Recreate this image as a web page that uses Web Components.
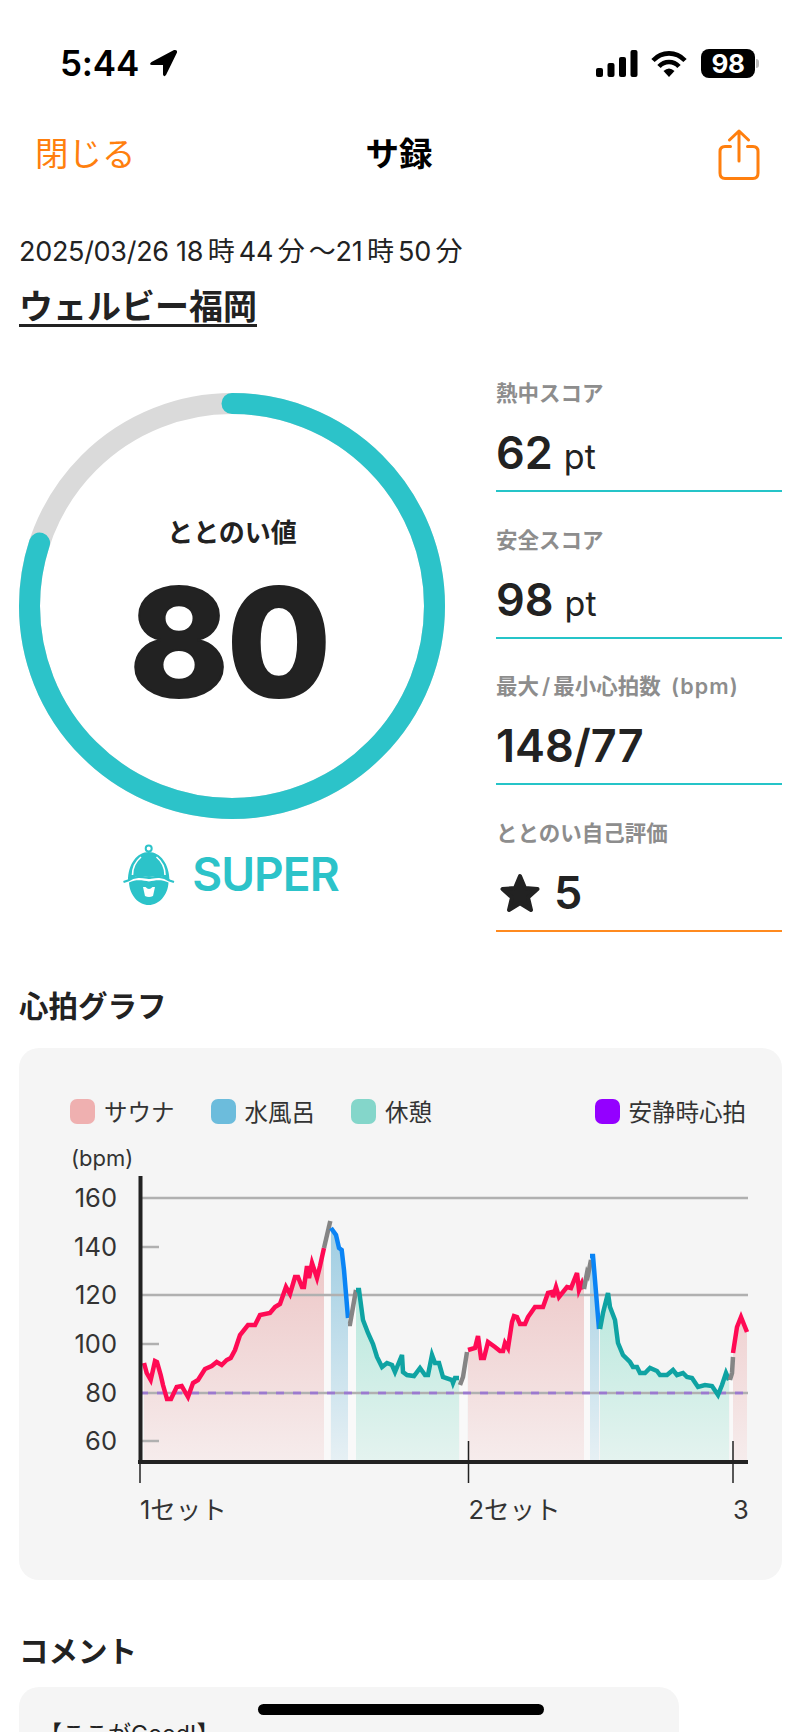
<!DOCTYPE html>
<html lang="ja">
<head>
<meta charset="utf-8">
<title>サ録</title>
<style>
  html, body { margin: 0; padding: 0; background: #fff; }
  body {
    width: 800px;
    height: 1732px;
    overflow: hidden;
    position: relative;
    color: #222;
    font-family: Inter, "Noto Sans CJK JP", sans-serif;
  }
</style>
</head>
<body>
<status-bar time="5:44" battery="98"></status-bar>
<nav-bar title="サ録" close="閉じる"></nav-bar>
<visit-header place="ウェルビー福岡">2025/03/26 18<b>時</b>44<b>分</b>〜21<b>時</b>50<b>分</b></visit-header>
<score-panel>
  <score-ring slot="ring" value="80" label="ととのい値" rank="SUPER"></score-ring>
  <score-row value="62" unit="pt">熱中スコア</score-row>
  <score-row value="98" unit="pt">安全スコア</score-row>
  <score-row value="148/77">最大<i>/</i>最小心拍数 <u>(bpm)</u></score-row>
  <score-row value="5" star accent="#ff8a1f">ととのい自己評価</score-row>
</score-panel>
<section-title style="margin-top:52px">心拍グラフ</section-title>
<heart-card style="margin-top:24px"></heart-card>
<section-title style="margin-top:49px">コメント</section-title>
<comment-card style="margin-top:18px">【ここがGood!】</comment-card>
<home-bar></home-bar>

<script>
const TEAL = '#2cc3c9';
const ORANGE = '#ff7f0e';

function define(name, cls) {
  customElements.define(name, cls);
}

class StatusBar extends HTMLElement {
  constructor() {
    super();
    this.attachShadow({mode: 'open'});
    this.shadowRoot.innerHTML = `
      <style>
        :host { display: flex; height: 108px; box-sizing: border-box; padding: 48px 45px 0 60px; justify-content: space-between; align-items: flex-start; color: #000; }
        .left, .right { display: flex; align-items: center; height: 30px; }
        .time { font: 600 35px/30px Inter, sans-serif; letter-spacing: -.2px; }
        .left svg { margin-left: 10px; }
        .right svg { display: block; }
        .bat { margin-left: 14px; width: 54px; height: 29px; border-radius: 8px; background: #000; color: #fff; font: 700 26px/29px Inter, sans-serif; text-align: center; letter-spacing: -.5px; position: relative; }
        .bat::after { content: ''; position: absolute; right: -4px; top: 10px; width: 3px; height: 9px; border-radius: 0 3px 3px 0; background: #bbb; }
      </style>
      <div class="left">
        <span class="time">${this.getAttribute('time')}</span>
        <svg width="28" height="28" viewBox="0 0 28 28"><path d="M25 1 2.500 13Q-.5 15.500 3 16H14V25.500Q15 28.500 17 26L28 3.500Q28.500.5 25 1Z" fill="#000"/></svg>
      </div>
      <div class="right">
        <svg width="42" height="27" viewBox="0 0 42 27" fill="#000"><rect x="0" y="18" width="7" height="9" rx="2"/><rect x="11.500" y="13" width="7" height="14" rx="2"/><rect x="23" y="7" width="7" height="20" rx="2"/><rect x="34.500" y="0" width="7" height="27" rx="2"/></svg>
        <svg style="margin-left:13px" width="36" height="27" viewBox="0 0 36 27" fill="none" stroke="#000" stroke-width="4.600"><path d="M2 10.500C11 1 25 1 34 10.500"/><path d="M8 16.500C13.500 10.500 22.500 10.500 28 16.500"/><path d="M18 27 12.500 21Q18 16 23.500 21Z" fill="#000" stroke="none"/></svg>
        <div class="bat">${this.getAttribute('battery')}</div>
      </div>`;
  }
}
define('status-bar', StatusBar);

class NavBar extends HTMLElement {
  constructor() {
    super();
    this.attachShadow({mode: 'open'});
    this.shadowRoot.innerHTML = `
      <style>
        :host { display: grid; grid-template-columns: 1fr auto 1fr; align-items: center; height: 94px; box-sizing: border-box; padding: 0 40px 0 35px; }
        span { margin-bottom: 6px; }
        .close { color: ${ORANGE}; font: 400 33.500px/40px "Noto Sans CJK JP", sans-serif; }
        .title { color: #000; font: 700 33.500px/40px "Noto Sans CJK JP", sans-serif; margin-left: 3px; }
        svg { justify-self: end; display: block; }
      </style>
      <span class="close">${this.getAttribute('close')}</span>
      <span class="title">${this.getAttribute('title')}</span>
      <svg width="42" height="52" viewBox="0 0 42 52" fill="none" stroke="${ORANGE}" stroke-width="3" stroke-linecap="round" stroke-linejoin="round">
        <path d="M12.500 17.500H7Q2 17.500 2 22.500V44Q2 49.500 7 49.500H35Q40 49.500 40 44V22.500Q40 17.500 35 17.500H29.500"/>
        <path d="M21 32V2M11.500 11 21 2 30.500 11"/>
      </svg>`;
  }
}
define('nav-bar', NavBar);

class VisitHeader extends HTMLElement {
  constructor() {
    super();
    this.attachShadow({mode: 'open'});
    this.shadowRoot.innerHTML = `
      <style>
        :host { display: block; padding: 0 19px; height: 176px; box-sizing: border-box; padding-top: 32px; }
        .date { font: 400 27px/36px Inter, "Noto Sans CJK JP", sans-serif; color: #222; letter-spacing: -.3px; }
        .place { margin-top: 15px; font: 600 34px/40px "Noto Sans CJK JP", sans-serif; color: #222; text-decoration: underline; text-decoration-thickness: 2.500px; text-underline-offset: 5px; }
        ::slotted(b) { font-weight: 400; margin: 0 4.500px; }
      </style>
      <div class="date"><slot></slot></div>
      <div class="place">${this.getAttribute('place')}</div>`;
  }
}
define('visit-header', VisitHeader);

class ScorePanel extends HTMLElement {
  constructor() {
    super();
    this.attachShadow({mode: 'open'});
    this.shadowRoot.innerHTML = `
      <style>
        :host { display: grid; grid-template-columns: 426px 286px; column-gap: 51px; padding-left: 19px; }
        .rows { display: flex; flex-direction: column; gap: 32.500px; }
      </style>
      <slot name="ring"></slot>
      <div class="rows"><slot></slot></div>`;
  }
}
define('score-panel', ScorePanel);

class ScoreRing extends HTMLElement {
  constructor() {
    super();
    this.attachShadow({mode: 'open'});
    let r = 202.500;
    let c = 2 * Math.PI * r;
    let value = Number(this.getAttribute('value'));
    this.shadowRoot.innerHTML = `
      <style>
        :host { display: block; padding-top: 15px; }
        .dial { display: grid; width: 426px; height: 426px; }
        .dial > * { grid-area: 1 / 1; }
        svg.ring { display: block; }
        .center { display: flex; flex-direction: column; align-items: center; }
        .label { margin-top: 120px; font: 600 26px/36px "Noto Sans CJK JP", sans-serif; color: #222; }
        .value { margin-top: 20px; margin-right: 6px; font: 800 150px/148px Inter, sans-serif; color: #222; letter-spacing: -2px; -webkit-text-stroke: 2px #222; }
        .rank { display: flex; align-items: center; justify-content: center; gap: 17px; margin-top: 25px; margin-right: 2px; height: 61px; color: ${TEAL}; font: 600 46px/61px Inter, sans-serif; letter-spacing: -1px; }
        .rank svg { display: block; }
      </style>
      <div class="dial">
        <svg class="ring" width="426" height="426" viewBox="0 0 426 426" fill="none" stroke-width="21">
          <circle cx="213" cy="213" r="${r}" stroke="#dadada"/>
          <circle cx="213" cy="213" r="${r}" stroke="${TEAL}" stroke-linecap="round" transform="rotate(-90 213 213)" stroke-dasharray="${c * value / 100} ${c}"/>
        </svg>
        <div class="center">
          <div class="label">${this.getAttribute('label')}</div>
          <div class="value">${value}</div>
        </div>
      </div>
      <div class="rank">
        <svg width="52" height="61" viewBox="0 0 52 61">
          <circle cx="25.700" cy="4.500" r="3" fill="none" stroke="${TEAL}" stroke-width="2"/>
          <path d="M5 37C5 20 14 8 25.700 8S46.500 20 46.500 37C38 30 32 32 26 33 20 32 13 30 5 37Z" fill="${TEAL}"/>
          <path d="M18 13C12 18 9.500 25 9.500 31M33.500 13C39.500 18 42 25 42 31" fill="none" stroke="#fff" stroke-width="1.600"/>
          <path d="M.5 38 5 36.500C13 31 20 33 26 34 32 33 38 31 46.500 36.500L51 38" fill="none" stroke="${TEAL}" stroke-width="2.200"/>
          <path d="M6 38.500C13 35 20 36.500 26 37.500 32 36.500 38 35 45.500 38.500 45 51 36 61 25.700 61S6.500 51 6 38.500Z" fill="${TEAL}"/>
          <path d="M20 43H32L30 52Q26 54 22 52Z" fill="#fff"/>
          <path d="M22.500 43Q26 47 29.500 43Z" fill="${TEAL}"/>
        </svg>
        <span>${this.getAttribute('rank')}</span>
      </div>`;
  }
}
define('score-ring', ScoreRing);

class ScoreRow extends HTMLElement {
  constructor() {
    super();
    this.attachShadow({mode: 'open'});
    let unit = this.getAttribute('unit');
    let star = this.hasAttribute('star');
    this.shadowRoot.innerHTML = `
      <style>
        :host { display: block; box-sizing: border-box; height: 114px; border-bottom: 2.500px solid ${this.getAttribute('accent') || '#25c4c8'}; }
        .label { font: 600 21.500px/30px Inter, "Noto Sans CJK JP", sans-serif; color: #8d8d8d; }
        ::slotted(i) { font-style: normal; margin: 0 3px; }
        ::slotted(u) { text-decoration: none; margin-left: 5px; letter-spacing: 1.100px; }
        .value { display: flex; align-items: baseline; padding-top: 14px; font: 600 45px/62px Inter, sans-serif; color: #222; }
        .unit { font: 400 34px/62px Inter, sans-serif; margin-left: 11px; }
        svg { display: block; align-self: center; margin: 0 13px 0 3px; }
      </style>
      <div class="label"><slot></slot></div>
      <div class="value">
        ${star ? `<svg width="42" height="40" viewBox="0 0 42 40"><path d="M21 3 26 15 38.500 16 29 24.500 32 37 21 30.300 10 37 13 24.500 3.500 16 16 15Z" fill="#222" stroke="#222" stroke-width="4" stroke-linejoin="round"/></svg>` : ''}
        <span>${this.getAttribute('value')}</span>
        ${unit ? `<span class="unit">${unit}</span>` : ''}
      </div>`;
  }
}
define('score-row', ScoreRow);

class SectionTitle extends HTMLElement {
  constructor() {
    super();
    this.attachShadow({mode: 'open'});
    this.shadowRoot.innerHTML = `
      <style>
        :host { display: block; padding: 0 19px; font: 600 29.500px/40px "Noto Sans CJK JP", sans-serif; color: #222; }
      </style>
      <slot></slot>`;
  }
}
define('section-title', SectionTitle);

class LegendItem extends HTMLElement {
  constructor() {
    super();
    this.attachShadow({mode: 'open'});
    this.shadowRoot.innerHTML = `
      <style>
        :host { display: flex; align-items: center; gap: 9px; font: 400 23.500px/25px "Noto Sans CJK JP", sans-serif; color: #333; }
        i { display: block; width: 25px; height: 25px; border-radius: 7px; background: ${this.getAttribute('color')}; }
      </style>
      <i></i><slot></slot>`;
  }
}
define('legend-item', LegendItem);

// heart rate line, one run per phase, in page coordinates
const PHASES = [
  {type: 'sauna', pts: [[144,1363],[146.700,1373],[150.700,1380],[153,1370],[155,1361],[157,1362],[160.700,1375],[163,1385],[167,1399],[171,1399],[176.700,1387],[181.700,1386],[188,1397],[193,1383],[198,1380],[205,1369],[211.700,1366],[216.700,1362],[221.700,1365],[226.700,1360],[230.700,1358],[235,1350],[240,1335],[248,1325],[255,1325],[260,1315],[270,1313],[275,1307],[280,1304],[286,1287],[290,1294],[295,1277],[298,1277],[302,1287],[304,1287],[307,1266],[309,1278],[312,1263],[317,1278],[320,1266],[324,1248]]},
  {type: 'move', pts: [[324,1248],[330.300,1221]]},
  {type: 'cold', pts: [[331,1228],[336,1235],[339,1248],[341.700,1250],[344,1270],[348,1318]]},
  {type: 'move', pts: [[348,1324],[350,1324],[356,1290]]},
  {type: 'rest', pts: [[356,1290],[359,1290],[363,1320],[368,1333],[373,1344],[377,1357],[382,1367],[387,1363],[392,1365],[395,1372],[402,1355],[403,1372],[407,1375],[414,1376],[420,1368],[425,1375],[428,1375],[432,1355],[435,1363],[439,1363],[443,1377],[452,1380],[453,1383],[455,1378],[459,1378]]},
  {type: 'move', pts: [[460,1385],[463,1377],[467,1352]]},
  {type: 'sauna', pts: [[468,1350],[475,1348],[478,1336],[481,1358],[484,1358],[488,1342],[495,1347],[500,1351],[503,1351],[505,1343],[508,1348],[512,1322],[514,1316],[517,1317],[520,1324],[525,1324],[528,1317],[535,1307],[543,1307],[548,1293],[552,1292],[553,1297],[556,1287],[559,1297],[567,1287],[571,1288],[577,1273],[579,1290],[582,1283],[584,1289]]},
  {type: 'move', pts: [[584,1289],[587,1273],[588,1275],[591,1260]]},
  {type: 'cold', pts: [[590,1256],[593,1256],[599,1329]]},
  {type: 'rest', pts: [[600,1329],[603,1313],[608,1293],[610,1307],[615,1320],[618,1343],[623,1355],[630,1362],[633,1367],[637,1367],[640,1373],[645,1373],[650,1368],[657,1371],[660,1375],[667,1375],[673,1370],[677,1375],[683,1373],[687,1377],[692,1378],[698,1387],[705,1385],[712,1386],[718,1395],[722,1385],[726,1373],[729,1380]]},
  {type: 'move', pts: [[730,1380],[732,1373],[733,1357]]},
  {type: 'sauna', pts: [[733,1353],[737,1327],[741,1317],[745,1327],[747,1332]]},
];
const LINE = {sauna: '#ff0a54', cold: '#0a84f5', rest: '#0fa3a3', move: '#858585'};
const FILL = {sauna: 'url(#gs)', cold: 'url(#gc)', rest: 'url(#gr)', move: 'rgba(255,255,255,.45)'};

class HeartChart extends HTMLElement {
  constructor() {
    super();
    this.attachShadow({mode: 'open'});
    const AXIS_BOTTOM = 1460;
    let areas = PHASES.map(p => {
      let line = p.pts.map(q => q.join(',')).join(' ');
      let first = p.pts[0][0];
      let last = p.pts[p.pts.length - 1][0];
      return `<polygon points="${first},${AXIS_BOTTOM} ${line} ${last},${AXIS_BOTTOM}" fill="${FILL[p.type]}"/>`;
    }).join('');
    let lines = PHASES.map(p => `<polyline points="${p.pts.map(q => q.join(',')).join(' ')}" fill="none" stroke="${LINE[p.type]}" stroke-width="4.500" stroke-linejoin="miter"/>`).join('');
    let yTicks = [[160,1198],[140,1247],[120,1295],[100,1344],[80,1393],[60,1441]];
    let labels = yTicks.map(([v, y]) => `<text x="117" y="${y - 1}" text-anchor="end" dominant-baseline="central" class="t">${v}</text>`).join('');
    let grid = yTicks.map(([v, y]) => {
      let full = v == 160 || v == 120 || v == 80;
      return `<line x1="140" x2="${full ? 748 : 159}" y1="${y}" y2="${y}" stroke="#b0b0b0" stroke-width="2.500"/>`;
    }).join('');
    this.shadowRoot.innerHTML = `
      <style>
        :host { display: block; }
        svg { display: block; }
        .t { font: 400 25.500px Inter, "Noto Sans CJK JP", sans-serif; fill: #333; }
        .u { font: 400 22px Inter, sans-serif; fill: #333; }
      </style>
      <svg width="763" height="400" viewBox="19 1140 763 400">
        <defs>
          <linearGradient id="gs" gradientUnits="userSpaceOnUse" x1="0" x2="0" y1="1240" y2="1460"><stop offset="0" stop-color="#ecc4c4"/><stop offset="1" stop-color="#f6ecec"/></linearGradient>
          <linearGradient id="gc" gradientUnits="userSpaceOnUse" x1="0" x2="0" y1="1230" y2="1460"><stop offset="0" stop-color="#9fcde2"/><stop offset="1" stop-color="#e6f0f4"/></linearGradient>
          <linearGradient id="gr" gradientUnits="userSpaceOnUse" x1="0" x2="0" y1="1290" y2="1460"><stop offset="0" stop-color="#b9e8dd"/><stop offset="1" stop-color="#e4f3ef"/></linearGradient>
        </defs>
        <text x="71" y="1158" dominant-baseline="central" class="u">(bpm)</text>
        ${labels}
        ${areas}
        ${grid}
        <line x1="140" x2="748" y1="1393" y2="1393" stroke="#8a4fe8" stroke-opacity=".55" stroke-width="3" stroke-dasharray="8 9"/>
        ${lines}
        <line x1="140.500" x2="140.500" y1="1176" y2="1464" stroke="#222" stroke-width="4"/>
        <line x1="138" x2="748" y1="1462" y2="1462" stroke="#222" stroke-width="4"/>
        <line x1="140" x2="140" y1="1462" y2="1483" stroke="#222" stroke-width="1.500"/>
        <line x1="468.500" x2="468.500" y1="1441" y2="1483" stroke="#222" stroke-width="1.500"/>
        <line x1="733" x2="733" y1="1441" y2="1483" stroke="#222" stroke-width="1.500"/>
        <text x="140" y="1509" dominant-baseline="central" class="t">1セット</text>
        <text x="468.500" y="1509" dominant-baseline="central" class="t">2セット</text>
        <text x="733" y="1509" dominant-baseline="central" class="t">3</text>
      </svg>`;
  }
}
define('heart-chart', HeartChart);

class HeartCard extends HTMLElement {
  constructor() {
    super();
    this.attachShadow({mode: 'open'});
    this.shadowRoot.innerHTML = `
      <style>
        :host { display: block; box-sizing: border-box; width: 763px; height: 532px; margin-left: 19px; padding-top: 44px; background: #f5f5f5; border-radius: 20px; }
        .legend { display: flex; height: 40px; margin-bottom: 8px; padding: 0 36px 0 51px; gap: 36px; }
        .legend legend-item:last-child { margin-left: auto; }
      </style>
      <div class="legend">
        <legend-item color="#efb0b0">サウナ</legend-item>
        <legend-item color="#6cbcdc">水風呂</legend-item>
        <legend-item color="#84d6ca">休憩</legend-item>
        <legend-item color="#9400ff">安静時心拍</legend-item>
      </div>
      <heart-chart></heart-chart>`;
  }
}
define('heart-card', HeartCard);

class CommentCard extends HTMLElement {
  constructor() {
    super();
    this.attachShadow({mode: 'open'});
    this.shadowRoot.innerHTML = `
      <style>
        :host { display: block; box-sizing: border-box; width: 660px; height: 200px; margin-left: 19px; padding: 30px 20px; background: #f5f5f5; border-radius: 20px; font: 400 23px/34px Inter, "Noto Sans CJK JP", sans-serif; color: #222; }
      </style>
      <slot></slot>`;
  }
}
define('comment-card', CommentCard);

class HomeBar extends HTMLElement {
  constructor() {
    super();
    this.attachShadow({mode: 'open'});
    this.shadowRoot.innerHTML = `
      <style>
        :host { display: block; position: absolute; left: 257.500px; top: 1704px; width: 286px; height: 11px; border-radius: 6px; background: #000; }
      </style>`;
  }
}
define('home-bar', HomeBar);
</script>
</body>
</html>
